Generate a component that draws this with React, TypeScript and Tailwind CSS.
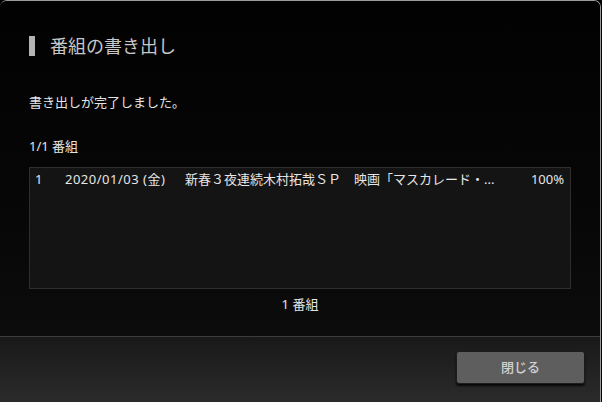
import React from 'react'

const font = { fontFamily: '"Noto Sans", "Noto Sans CJK JP", sans-serif' }

type Row = {
  no: string
  date: string
  title: string
  progress: string
}

const rows: Row[] = [
  {
    no: '1',
    date: '2020/01/03 (金)',
    title: '新春３夜連続木村拓哉ＳＰ　映画「マスカレード・...',
    progress: '100%',
  },
]

export default function App() {
  return (
    <div className="w-[602px] h-[402px] bg-black overflow-hidden" style={font}>
      <div className="w-[601px] h-[402px] flex flex-col rounded-t-[7px] border-t border-r border-[#9c9c9c] overflow-hidden">
        {/* body */}
        <div className="h-[335px] flex flex-col px-[29px] bg-gradient-to-b from-[#020202] to-[#0c0c0c] shrink-0">
          <div className="mt-[35px] h-[20px] flex items-center">
            <div className="w-[6px] h-[20px] bg-[#b4b4b4]" />
            <h1 className="ml-[15px] text-[18px] leading-[20px] text-[#c8c8c8]">番組の書き出し</h1>
          </div>

          <p className="mt-[37px] text-[13px] leading-[18px] text-[#e4e4e4]">書き出しが完了しました。</p>

          <p className="mt-[26px] text-[13px] leading-[18px] text-[#e4e4e4]">1/1 番組</p>

          <div className="mt-[12px] h-[122px] w-[542px] bg-[#141414] border border-[#2e2e2e]">
            {rows.map((r) => (
              <div key={r.no} className="flex items-center h-[22px] mt-[1px] pl-[5px] pr-[6px] text-[13px] text-[#e6e6e6] whitespace-nowrap">
                <span className="w-[30px]">{r.no}</span>
                <span className="w-[120px] tracking-[0.5px]">{r.date}</span>
                <span className="flex-1">{r.title}</span>
                <span>{r.progress}</span>
              </div>
            ))}
          </div>

          <p className="mt-[6px] text-center text-[13px] leading-[18px] text-[#e4e4e4] w-[542px]">1 番組</p>
        </div>

        {/* footer */}
        <div className="flex-1 border-t border-[#3c3c3c] bg-gradient-to-b from-[#191919] to-[#2b2b2b] flex justify-end items-start pr-[15px] pt-[14px]">
          <button className="w-[129px] h-[33px] rounded-[3px] bg-[#5e5e5e] border border-[#1c1c1c] shadow-[0_2px_2px_rgba(0,0,0,0.8)] text-[13px] text-[#d2d2d2] font-medium">
            閉じる
          </button>
        </div>
      </div>
    </div>
  )
}
